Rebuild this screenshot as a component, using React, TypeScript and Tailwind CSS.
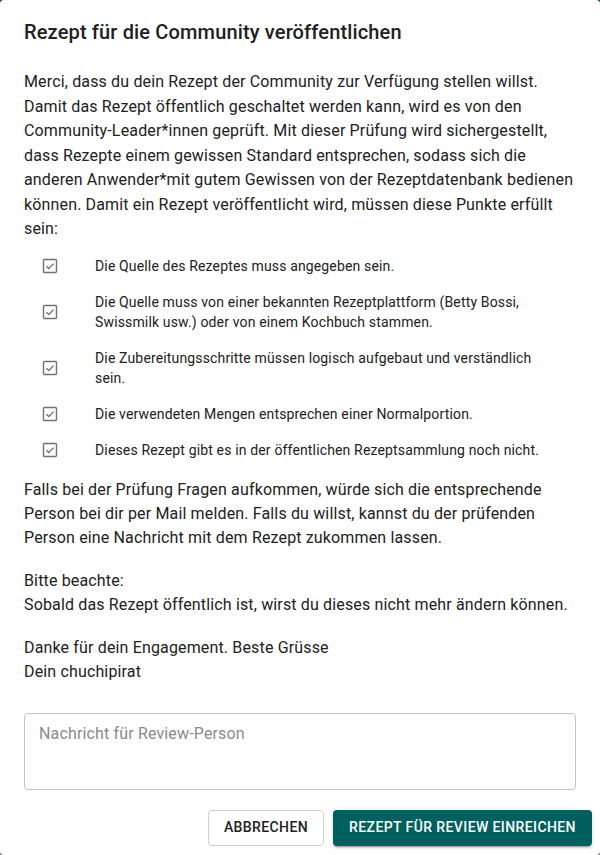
import React from "react";

const rules: React.ReactNode[] = [
  "Die Quelle des Rezeptes muss angegeben sein.",
  <>
    Die Quelle muss von einer bekannten Rezeptplattform (Betty Bossi,
    <br />
    Swissmilk usw.) oder von einem Kochbuch stammen.
  </>,
  <>
    Die Zubereitungsschritte müssen logisch aufgebaut und verständlich
    <br />
    sein.
  </>,
  "Die verwendeten Mengen entsprechen einer Normalportion.",
  "Dieses Rezept gibt es in der öffentlichen Rezeptsammlung noch nicht.",
];

const CheckIcon = () => (
  <svg width="16" height="16" viewBox="0 0 16 16" className="shrink-0">
    <rect x="1.5" y="1.5" width="13" height="13" rx="1" fill="none" stroke="#727272" strokeWidth="1.4" />
    <path d="M4.4 8.2 L6.8 10.5 L11.6 5.6" fill="none" stroke="#727272" strokeWidth="1.3" />
  </svg>
);

export default function App() {
  return (
    <div className="w-[600px] h-[855px] bg-gradient-to-b from-[#0d4545] to-[#6e6e6e] font-['Roboto',sans-serif] text-[#212121]">
      <div className="w-full h-full bg-white rounded-[4px] flex flex-col">
        <h2 className="px-6 pt-4 pb-4 text-[20px] leading-8 font-medium tracking-[0.15px]">
          Rezept für die Community veröffentlichen
        </h2>

        <div className="px-6 pt-[6px] text-[16px] leading-6 tracking-[0.15px]">
          <p className="leading-[24.5px]">
            Merci, dass du dein Rezept der Community zur Verfügung stellen willst.
            <br />
            Damit das Rezept öffentlich geschaltet werden kann, wird es von den
            <br />
            Community-Leader*innen geprüft. Mit dieser Prüfung wird sichergestellt,
            <br />
            dass Rezepte einem gewissen Standard entsprechen, sodass sich die
            <br />
            anderen Anwender*mit gutem Gewissen von der Rezeptdatenbank bedienen
            <br />
            können. Damit ein Rezept veröffentlicht wird, müssen diese Punkte erfüllt
            <br />
            sein:
          </p>

          <ul className="pt-[6px] pb-[10px]">
            {rules.map((r, i) => (
              <li key={i} className="flex items-center pl-[18px] pr-4 py-2">
                <CheckIcon />
                <span className="ml-[37px] text-[14px] leading-5 tracking-[0.15px]">{r}</span>
              </li>
            ))}
          </ul>

          <p>
            Falls bei der Prüfung Fragen aufkommen, würde sich die entsprechende
            <br />
            Person bei dir per Mail melden. Falls du willst, kannst du der prüfenden
            <br />
            Person eine Nachricht mit dem Rezept zukommen lassen.
          </p>
          <p className="mt-[19px]">
            Bitte beachte:
            <br />
            Sobald das Rezept öffentlich ist, wirst du dieses nicht mehr ändern können.
          </p>
          <p className="mt-[19px]">
            Danke für dein Engagement. Beste Grüsse
            <br />
            Dein chuchipirat
          </p>

          <textarea
            placeholder="Nachricht für Review-Person"
            className="mt-[29px] block w-full h-[77px] resize-none rounded-[4px] border border-[#c4c4c4] px-[14px] pt-[8px] text-[16px] leading-6 placeholder:text-[#8a8a8a] outline-none"
          />
        </div>

        <div className="flex justify-end gap-[9px] px-2 mt-[20px]">
          <button className="h-9 w-[116px] rounded-[4px] border border-[#cfcfcf] text-[14px] font-medium uppercase tracking-[0.4px] text-[#212121]">
            Abbrechen
          </button>
          <button className="h-9 w-[259px] rounded-[4px] bg-[#00605f] text-[14px] font-medium uppercase tracking-[0.4px] text-white shadow-[0_3px_1px_-2px_rgba(0,0,0,0.2),0_2px_2px_0_rgba(0,0,0,0.14),0_1px_5px_0_rgba(0,0,0,0.12)]">
            Rezept für Review einreichen
          </button>
        </div>
      </div>
    </div>
  );
}
